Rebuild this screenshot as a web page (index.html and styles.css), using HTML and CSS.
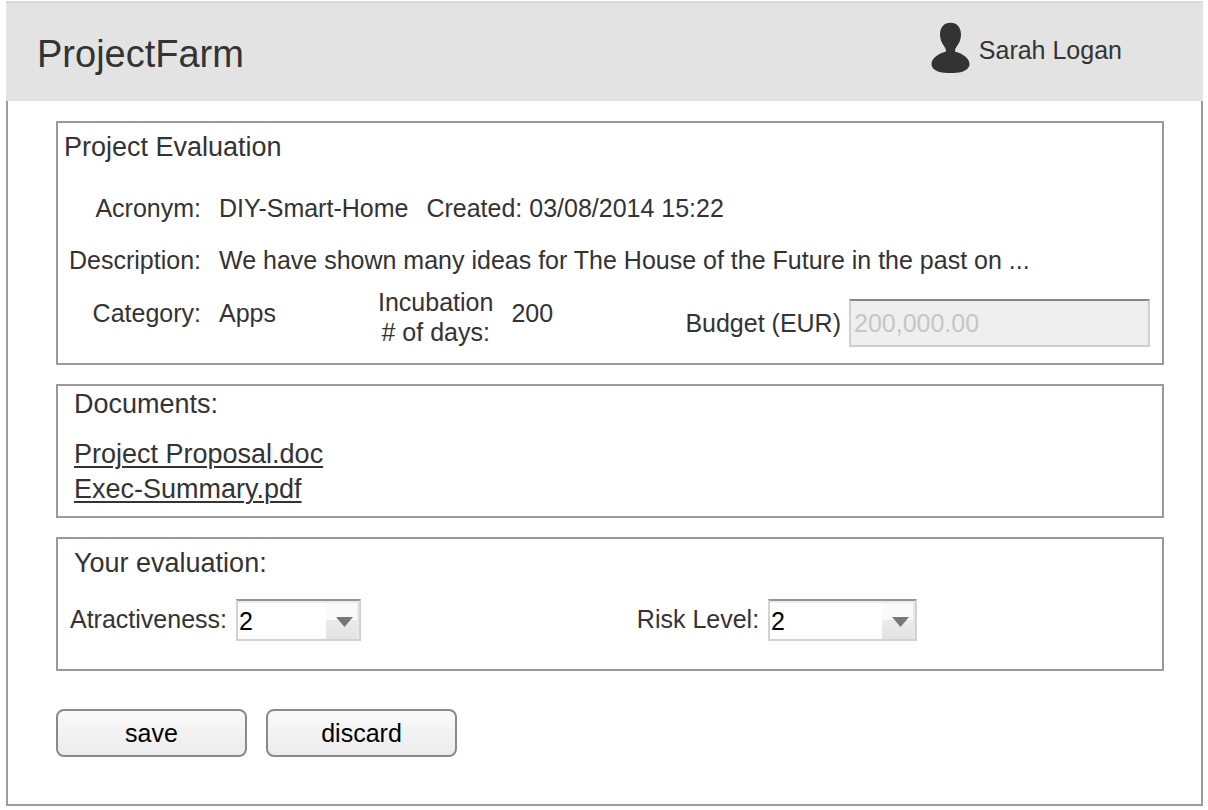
FILE: index.html
```html
<!DOCTYPE html>
<html lang="en">
<head>
<meta charset="utf-8">
<meta name="viewport" content="width=device-width, initial-scale=1">
<title>ProjectFarm</title>
<link rel="stylesheet" href="styles.css">
</head>
<body>
<div class="sheet">
  <header class="topbar">
    <h1 class="brand">ProjectFarm</h1>
    <div class="user">
      <svg class="avatar" viewBox="0 0 40 52" aria-hidden="true">
        <path d="M20.500 .8C27 .8 31 5.500 31 12.500c0 5-2 9-4 11.500-1.500 2-2 3.500-2 5.500C33 31.500 39.500 36.500 39.500 42c0 4.500-4 6.500-8 8-6 1.300-16 1.300-22 0-4-1.500-8-3.500-8-8 0-5.500 6.500-10.500 14.500-12.500 0-2-.5-3.500-2-5.500-2-2.500-4-6.500-4-11.500C10 5.500 14 .8 20.500 .8z"/>
      </svg>
      <span>Sarah Logan</span>
    </div>
  </header>

  <main class="content">
    <section class="card card-project">
      <h2 class="card-title">Project Evaluation</h2>
      <div class="rows">
        <div class="row">
          <span class="label">Acronym:</span>
          <span>DIY-Smart-Home</span>
          <span>Created: 03/08/2014 15:22</span>
        </div>
        <div class="row">
          <span class="label">Description:</span>
          <span>We have shown many ideas for The House of the Future in the past on ...</span>
        </div>
      </div>
      <div class="row row-details">
        <span class="label mid">Category:</span>
        <span class="category mid">Apps</span>
        <span class="incubation">Incubation<br># of days:</span>
        <span class="mid">200</span>
        <div class="budget">
          <label for="budget">Budget (EUR)</label>
          <input class="budget-input" id="budget" type="text" value="200,000.00" disabled>
        </div>
      </div>
    </section>

    <section class="card card-documents">
      <h2 class="card-title">Documents:</h2>
      <ul class="files">
        <li><a href="#proposal">Project Proposal.doc</a></li>
        <li><a href="#summary">Exec-Summary.pdf</a></li>
      </ul>
    </section>

    <section class="card card-evaluation">
      <h2 class="card-title">Your evaluation:</h2>
      <div class="fields">
        <div class="field">
          <label for="attractiveness">Atractiveness:</label>
          <span class="picker">
            <select id="attractiveness"><option>1</option><option selected>2</option><option>3</option></select>
            <svg class="arrow" viewBox="0 0 17 10" aria-hidden="true"><path d="M0 0h17L8.500 10z"/></svg>
          </span>
        </div>
        <div class="field">
          <label for="risk">Risk Level:</label>
          <span class="picker picker-wide">
            <select id="risk"><option>1</option><option selected>2</option><option>3</option></select>
            <svg class="arrow" viewBox="0 0 17 10" aria-hidden="true"><path d="M0 0h17L8.500 10z"/></svg>
          </span>
        </div>
      </div>
    </section>

    <div class="actions">
      <button class="button" type="button">save</button>
      <button class="button" type="button">discard</button>
    </div>
  </main>
</div>
</body>
</html>
```

FILE: styles.css
```css
* {
  box-sizing: border-box;
}

body {
  margin: 0;
  padding: 1px 5px 4px 6px;
  background: #fff;
  color: #333;
  font-family: "Liberation Sans", Arial, Helvetica, sans-serif;
  font-size: 25px;
  line-height: 30px;
}

h1,
h2,
ul {
  margin: 0;
  padding: 0;
  font-weight: normal;
}

input,
select,
button {
  margin: 0;
  font: inherit;
}

.sheet {
  display: flex;
  flex-direction: column;
  min-height: calc(100vh - 5px);
}

.topbar {
  display: flex;
  align-items: center;
  justify-content: space-between;
  min-height: 100px;
  padding: 0 81px 8px 31px;
  background: #e3e3e3;
  border-top: 2px solid #d8dad9;
}

.brand {
  padding-top: 12px;
  font-size: 38px;
  line-height: 44px;
}

.user {
  display: flex;
  align-items: center;
  gap: 9px;
}

.avatar {
  width: 40px;
  height: 52px;
  fill: #333;
}

.user span {
  padding-top: 4px;
}

.content {
  display: flex;
  flex: 1;
  flex-direction: column;
  gap: 19px;
  padding: 20px 37px 40px 48px;
  border: solid #9c9c9c;
  border-width: 0 2px 2px;
}

.card {
  padding: 8px 12px 16px 11px;
  border: 2px solid #9a9a9a;
}

.card-title {
  font-size: 27px;
  line-height: 32px;
}

.card-project .card-title {
  margin-left: -5px;
}

.rows {
  display: grid;
  gap: 22px;
  padding: 30px 0 12px;
}

.row {
  display: flex;
  gap: 18px;
}

.label {
  width: 132px;
  text-align: right;
}

.mid {
  padding-top: 11px;
}

.category {
  width: 141px;
}

.incubation {
  text-align: center;
}

.budget {
  display: flex;
  align-items: center;
  align-self: flex-end;
  gap: 8px;
  margin-left: auto;
}

.budget-input {
  width: 301px;
  height: 48px;
  padding: 0 3px;
  border: 2px solid #d0d0d0;
  border-top-color: #868686;
  border-radius: 0;
  background: #efefef;
  color: #c6c6c6;
}

.card-documents {
  padding: 2px 16px 9px;
}

.files {
  padding-top: 17px;
  font-size: 27px;
  line-height: 35px;
  list-style: none;
}

.files a {
  color: inherit;
  text-decoration-thickness: 2px;
  text-underline-offset: 3px;
}

.card-evaluation {
  padding: 8px 15px 28px 12px;
}

.card-evaluation .card-title {
  margin-left: 4px;
}

.fields {
  display: grid;
  grid-template-columns: 10fr 9fr;
  padding-top: 20px;
}

.field {
  display: flex;
  gap: 9px;
}

.field label {
  padding-top: 5px;
}

.picker {
  position: relative;
  width: 125px;
  height: 42px;
}

.picker-wide {
  width: 149px;
}

.picker select {
  width: 100%;
  height: 100%;
  padding: 2px 36px 0 1px;
  border: 2px solid #d2d2d2;
  border-top-color: #939393;
  border-radius: 0;
  appearance: none;
  background:
    linear-gradient(#fafafa 0 50%, #ececec 50%, #e2e2e2) right / 33px 100% no-repeat,
    #fff;
  box-shadow: inset 0 2px #ececec, inset -2px 0 #e8e8e8;
  color: #000;
}

.arrow {
  position: absolute;
  top: 18px;
  right: 8px;
  width: 17px;
  height: 10px;
  fill: #777;
  pointer-events: none;
}

.actions {
  display: flex;
  gap: 19px;
  padding-top: 19px;
}

.button {
  width: 191px;
  height: 48px;
  border: 2px solid #8a8a8a;
  border-radius: 8px;
  background: linear-gradient(#fafafa, #ececec);
  color: #000;
}
```
